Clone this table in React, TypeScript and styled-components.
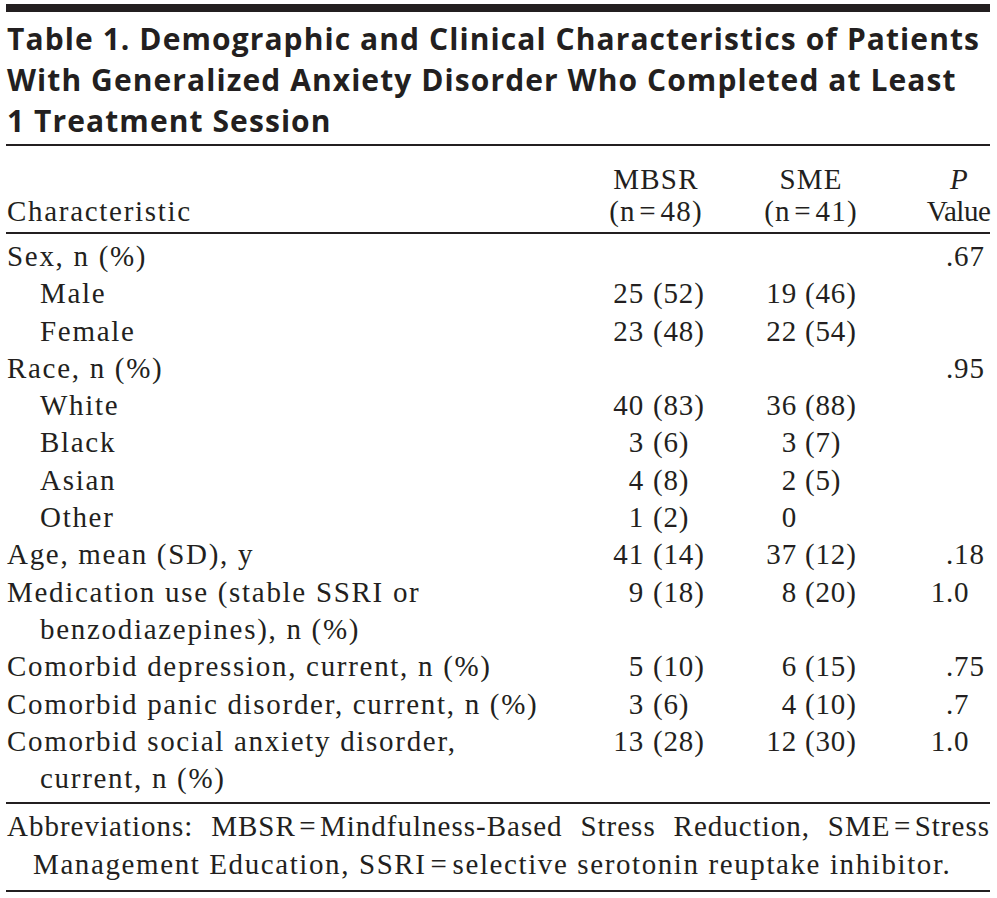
import React from "react";
import styled, { createGlobalStyle } from "styled-components";

const GlobalStyle = createGlobalStyle`
  html, body { margin: 0; padding: 0; background: #ffffff; }
  body { color: #231f20; }
`;

const INK = "#231f20";

const Page = styled.div`
  width: 984px;
  padding: 4px 0 0 6px;
  font-family: "Liberation Serif", "Times New Roman", serif;
  font-size: 29px;
  color: ${INK};
`;

const Rule = styled.div<{ $thick?: number }>`
  height: ${(p) => p.$thick ?? 2}px;
  background: ${INK};
`;

const Title = styled.h1`
  margin: 0;
  padding: 6px 0 3px 1px;
  font-family: "Open Sans", "Liberation Sans", sans-serif;
  font-weight: 700;
  font-size: 30px;
  line-height: 41px;
  letter-spacing: 1.08px;
  white-space: nowrap;
  color: ${INK};
`;

const Grid = styled.div<{ $lh: number; $pt: number; $pb: number }>`
  display: grid;
  grid-template-columns: 594px 110px 150px 130px;
  line-height: ${(p) => p.$lh}px;
  padding: ${(p) => p.$pt}px 0 ${(p) => p.$pb}px 1px;
`;

const HeadLabel = styled.div`
  align-self: end;
  letter-spacing: 1.7px;
`;

const HeadCell = styled.div<{ $lead: number; $ls: number }>`
  padding-left: ${(p) => p.$lead}px;
  text-align: center;
  white-space: nowrap;
  letter-spacing: ${(p) => p.$ls}px;
`;

const Label = styled.div<{ $indent?: boolean }>`
  padding-left: ${(p) => (p.$indent ? 33 : 0)}px;
  white-space: nowrap;
  letter-spacing: 1.7px;
`;

const Continue = styled.div`
  padding-left: 33px;
`;

const Split = styled.div<{ $lead: number; $numW: number }>`
  display: grid;
  grid-template-columns: ${(p) => p.$numW}px auto;
  padding-left: ${(p) => p.$lead}px;
  align-self: start;
  white-space: nowrap;
  letter-spacing: 0.85px;
`;

const Whole = styled.span`
  text-align: right;
`;

const Part = styled.span<{ $gap: number }>`
  padding-left: ${(p) => p.$gap}px;
  text-align: left;
`;

const Note = styled.div`
  padding: 4px 0 7px 1px;
  line-height: 37.3px;
`;

const NoteFirst = styled.div`
  letter-spacing: 1px;
  text-align: justify;
  text-align-last: justify;
`;

const NoteRest = styled.div`
  padding-left: 26px;
  letter-spacing: 1.6px;
`;

type Row = {
  label: string[];
  indent?: boolean;
  mbsr?: [string, string];
  sme?: [string, string];
  p?: [string, string];
};

const rows: Row[] = [
  { label: ["Sex, n (%)"], p: ["", ".67"] },
  { label: ["Male"], indent: true, mbsr: ["25", "(52)"], sme: ["19", "(46)"] },
  { label: ["Female"], indent: true, mbsr: ["23", "(48)"], sme: ["22", "(54)"] },
  { label: ["Race, n (%)"], p: ["", ".95"] },
  { label: ["White"], indent: true, mbsr: ["40", "(83)"], sme: ["36", "(88)"] },
  { label: ["Black"], indent: true, mbsr: ["3", "(6)"], sme: ["3", "(7)"] },
  { label: ["Asian"], indent: true, mbsr: ["4", "(8)"], sme: ["2", "(5)"] },
  { label: ["Other"], indent: true, mbsr: ["1", "(2)"], sme: ["0", ""] },
  { label: ["Age, mean (SD), y"], mbsr: ["41", "(14)"], sme: ["37", "(12)"], p: ["", ".18"] },
  {
    label: ["Medication use (stable SSRI or", "benzodiazepines), n (%)"],
    mbsr: ["9", "(18)"],
    sme: ["8", "(20)"],
    p: ["1", ".0"],
  },
  { label: ["Comorbid depression, current, n (%)"], mbsr: ["5", "(10)"], sme: ["6", "(15)"], p: ["", ".75"] },
  { label: ["Comorbid panic disorder, current, n (%)"], mbsr: ["3", "(6)"], sme: ["4", "(10)"], p: ["", ".7"] },
  {
    label: ["Comorbid social anxiety disorder,", "current, n (%)"],
    mbsr: ["13", "(28)"],
    sme: ["12", "(30)"],
    p: ["1", ".0"],
  },
];

const cols = {
  mbsr: { lead: 0, numW: 43, gap: 9 },
  sme: { lead: 50, numW: 36, gap: 8 },
  p: { lead: 65, numW: 20, gap: 0 },
};

function Value({ v, c }: { v?: [string, string]; c: { lead: number; numW: number; gap: number } }) {
  return (
    <Split $lead={c.lead} $numW={c.numW}>
      <Whole>{v ? v[0] : ""}</Whole>
      <Part $gap={v && v[1] && v[0] && c.gap ? c.gap : 0}>{v ? v[1] : ""}</Part>
    </Split>
  );
}

const EQ = "\u200A=\u200A";

export default function App() {
  return (
    <>
      <GlobalStyle />
      <Page>
        <Rule $thick={8} />
        <Title>
          Table 1. Demographic and Clinical Characteristics of Patients
          <br />
          With Generalized Anxiety Disorder Who Completed at Least
          <br />1 Treatment Session
        </Title>
        <Rule />
        <Grid $lh={32} $pt={17} $pb={5}>
          <HeadLabel>Characteristic</HeadLabel>
          <HeadCell $lead={0} $ls={1.2}>
            MBSR
            <br />
            (n{EQ}48)
          </HeadCell>
          <HeadCell $lead={50} $ls={1.2}>
            SME
            <br />
            (n{EQ}41)
          </HeadCell>
          <HeadCell $lead={65} $ls={-0.5}>
            <i>P</i>
            <br />
            Value
          </HeadCell>
        </Grid>
        <Rule />
        <Grid $lh={37.3} $pt={4} $pb={5}>
          {rows.map((r, i) => (
            <React.Fragment key={i}>
              <Label $indent={r.indent}>
                {r.label[0]}
                {r.label.slice(1).map((l, j) => (
                  <Continue key={j}>{l}</Continue>
                ))}
              </Label>
              <Value v={r.mbsr} c={cols.mbsr} />
              <Value v={r.sme} c={cols.sme} />
              <Value v={r.p} c={cols.p} />
            </React.Fragment>
          ))}
        </Grid>
        <Rule />
        <Note>
          <NoteFirst>
            Abbreviations: MBSR{EQ}Mindfulness-Based Stress Reduction, SME{EQ}Stress
          </NoteFirst>
          <NoteRest>Management Education, SSRI{EQ}selective serotonin reuptake inhibitor.</NoteRest>
        </Note>
        <Rule />
      </Page>
    </>
  );
}
